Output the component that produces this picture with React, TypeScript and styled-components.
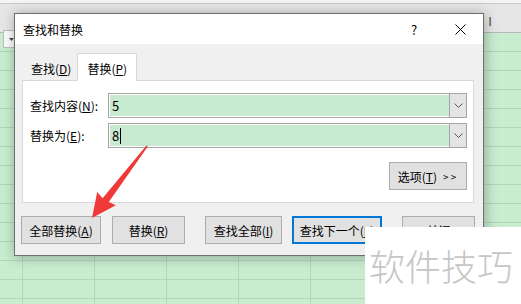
import styled, { createGlobalStyle } from "styled-components";

const GlobalStyle = createGlobalStyle`
  html, body {
    margin: 0;
    padding: 0;
  }
  body {
    width: 521px;
    height: 304px;
    overflow: hidden;
    background: #c8ecd0;
    font-family: "Noto Sans CJK SC", "Noto Sans", sans-serif;
  }
`;

const Screen = styled.div`
  position: relative;
  width: 521px;
  height: 304px;
  overflow: hidden;
`;

/* ---------- spreadsheet behind the dialog ---------- */

const Sheet = styled.div`
  display: flex;
  flex-direction: column;
  height: 100%;
`;

const TopStrip = styled.div`
  height: 3px;
  background: #f4f4f4;
  border-bottom: 1px solid #c9c9c9;
`;

const HeaderRow = styled.div`
  display: flex;
  height: 28px;
  background: #e6e6e6;
  border-bottom: 1px solid #b8b8b8;
`;

const HeaderCell = styled.div<{ $w: number }>`
  flex: 0 0 ${(p) => p.$w}px;
  box-sizing: border-box;
  padding-top: 9px;
  text-align: center;
  font-family: "Liberation Sans", Arial, sans-serif;
  font-size: 13px;
  line-height: 17px;
  color: #4a4a4a;
`;

const Grid = styled.div`
  display: grid;
  grid-template-columns: 23px repeat(7, 72px);
  grid-auto-rows: 19px;
  flex: 1;
  overflow: hidden;
`;

const Cell = styled.div`
  box-sizing: border-box;
  border-right: 1px solid #b2d6ba;
  border-bottom: 1px solid #b2d6ba;
  background: #c8ecd0;
`;

const FilterButton = styled.div`
  position: absolute;
  left: 3px;
  top: 30px;
  width: 14px;
  height: 18px;
  box-sizing: border-box;
  background: #fafafa;
  border: 1px solid #bdbdbd;
  display: flex;
  align-items: center;
  justify-content: flex-end;
  padding-right: 2px;
`;

/* ---------- dialog ---------- */

const Dialog = styled.div`
  position: absolute;
  left: 14px;
  top: 13px;
  width: 470px;
  height: 243px;
  box-sizing: border-box;
  border: 1px solid #6f6f6f;
  background: #f0f0f0;
  box-shadow: 1px 1px 12px rgba(0, 0, 0, 0.3);
  display: flex;
  flex-direction: column;
  font-size: 12px;
  color: #000;
`;

const TitleBar = styled.div`
  display: flex;
  align-items: center;
  height: 30px;
  background: #fff;
`;

const Title = styled.div`
  flex: 1;
  padding-left: 8px;
  font-size: 12px;
`;

const TitleButton = styled.div`
  width: 46px;
  height: 30px;
  display: flex;
  align-items: center;
  justify-content: center;
  font-size: 13px;
`;

const Body = styled.div`
  flex: 1;
  display: flex;
  flex-direction: column;
  padding: 9px 9px 11px 7px;
`;

const TabRow = styled.div`
  display: flex;
  align-items: flex-end;
  height: 27px;
`;

const Tab = styled.div<{ $active?: boolean }>`
  position: relative;
  z-index: 1;
  box-sizing: border-box;
  display: flex;
  align-items: center;
  height: ${(p) => (p.$active ? 28 : 24)}px;
  margin-bottom: ${(p) => (p.$active ? -1 : 0)}px;
  padding: ${(p) => (p.$active ? "2px 9px 0 9px" : "0 6px 0 9px")};
  background: ${(p) => (p.$active ? "#fff" : "transparent")};
  border: ${(p) => (p.$active ? "1px solid #d9d9d9" : "none")};
  border-bottom: none;
`;

const Panel = styled.div`
  height: 123px;
  box-sizing: border-box;
  border: 1px solid #d9d9d9;
  background: #fff;
  padding: 12px 6px 12px 7px;
  display: flex;
  flex-direction: column;
`;

const FieldRow = styled.div`
  display: flex;
  align-items: center;
  height: 25px;
  & + & {
    margin-top: 5px;
  }
`;

const Label = styled.div`
  flex: 0 0 78px;
`;

const Combo = styled.div`
  display: flex;
  width: 359px;
  height: 25px;
  box-sizing: border-box;
  border: 1px solid #a5a5a5;
  padding: 1px 0 1px 1px;
  background: #fff;
`;

const Field = styled.div`
  flex: 1;
  display: flex;
  align-items: center;
  padding-left: 2px;
  background: #c7ead0;
  font-size: 13px;
`;

const Caret = styled.span`
  display: inline-block;
  width: 1px;
  height: 16px;
  margin-left: 1px;
  background: #000;
`;

const DropButton = styled.div`
  flex: 0 0 16px;
  margin: -1px 0;
  display: flex;
  align-items: center;
  justify-content: center;
  background: #e4e4e4;
  border-left: 1px solid #a5a5a5;
`;

const OptionsRow = styled.div`
  display: flex;
  justify-content: flex-end;
  margin-top: 14px;
`;

const Button = styled.div<{ $w: number; $gap?: number; $default?: boolean }>`
  flex: 0 0 ${(p) => p.$w}px;
  height: 28px;
  margin-left: ${(p) => p.$gap ?? 0}px;
  box-sizing: border-box;
  display: flex;
  align-items: center;
  justify-content: center;
  background: #e1e1e1;
  border: ${(p) => (p.$default ? "2px solid #0078d7" : "1px solid #adadad")};
  white-space: nowrap;
`;

const Arrows = styled.span`
  margin-left: 6px;
  font-size: 10px;
  letter-spacing: 2px;
`;

const ButtonRow = styled.div`
  display: flex;
  margin-top: 13px;
  margin-left: -1px;
`;

const U = styled.span`
  text-decoration: underline;
  text-underline-offset: 1px;
`;

/* ---------- overlays ---------- */

const Watermark = styled.div`
  position: absolute;
  left: 365px;
  top: 227px;
  width: 156px;
  height: 77px;
  box-sizing: border-box;
  padding: 0 0 2px 4px;
  display: flex;
  align-items: center;
  background: #fff;
  font-size: 36px;
  font-weight: 300;
  color: #c6c6c6;
  white-space: nowrap;
`;

const Overlay = styled.svg`
  position: absolute;
  left: 0;
  top: 0;
`;

// only the last column letter shows beside the dialog
const columns = ["", "", "", "", "", "", "I"];

export default function App() {
  return (
    <Screen>
      <GlobalStyle />
      <Sheet>
        <TopStrip />
        <HeaderRow>
          <HeaderCell $w={22} />
          {columns.map((c, i) => (
            <HeaderCell key={i} $w={72}>
              {c}
            </HeaderCell>
          ))}
        </HeaderRow>
        <Grid>
          {Array.from({ length: 15 * 8 }).map((_, i) => (
            <Cell key={i} />
          ))}
        </Grid>
      </Sheet>
      <FilterButton>
        <svg width="5" height="3" viewBox="0 0 5 3">
          <path d="M0 0h5L2.5 3z" fill="#444" />
        </svg>
      </FilterButton>

      <Dialog>
        <TitleBar>
          <Title>查找和替换</Title>
          <TitleButton>?</TitleButton>
          <TitleButton>
            <svg width="11" height="11" viewBox="0 0 11 11">
              <path d="M0.5 0.5l10 10M10.5 0.5l-10 10" stroke="#000" strokeWidth="1" />
            </svg>
          </TitleButton>
        </TitleBar>
        <Body>
          <TabRow>
            <Tab>
              查找(<U>D</U>)
            </Tab>
            <Tab $active>
              替换(<U>P</U>)
            </Tab>
          </TabRow>
          <Panel>
            <FieldRow>
              <Label>
                查找内容(<U>N</U>):
              </Label>
              <Combo>
                <Field>5</Field>
                <DropButton>
                  <svg width="9" height="5" viewBox="0 0 9 5">
                    <path d="M0.5 0.5l4 4 4-4" stroke="#555" fill="none" />
                  </svg>
                </DropButton>
              </Combo>
            </FieldRow>
            <FieldRow>
              <Label>
                替换为(<U>E</U>):
              </Label>
              <Combo>
                <Field>
                  8<Caret />
                </Field>
                <DropButton>
                  <svg width="9" height="5" viewBox="0 0 9 5">
                    <path d="M0.5 0.5l4 4 4-4" stroke="#555" fill="none" />
                  </svg>
                </DropButton>
              </Combo>
            </FieldRow>
            <OptionsRow>
              <Button $w={78}>
                选项(<U>T</U>)<Arrows>&gt;&gt;</Arrows>
              </Button>
            </OptionsRow>
          </Panel>
          <ButtonRow>
            <Button $w={80}>
              全部替换(<U>A</U>)
            </Button>
            <Button $w={73} $gap={11}>
              替换(<U>R</U>)
            </Button>
            <Button $w={77} $gap={20}>
              查找全部(<U>I</U>)
            </Button>
            <Button $w={90} $gap={10} $default>
              查找下一个(<U>F</U>)
            </Button>
            <Button $w={73} $gap={20}>
              关闭
            </Button>
          </ButtonRow>
        </Body>
      </Dialog>

      <Overlay width="521" height="304" viewBox="0 0 521 304">
        <polygon
          points="147.8,146.4 146.4,145.6 102.6,198.2 97.2,192 92,218 115.8,205.2 108.8,202"
          fill="#f03a3a"
        />
      </Overlay>
      <Watermark>软件技巧</Watermark>
    </Screen>
  );
}
